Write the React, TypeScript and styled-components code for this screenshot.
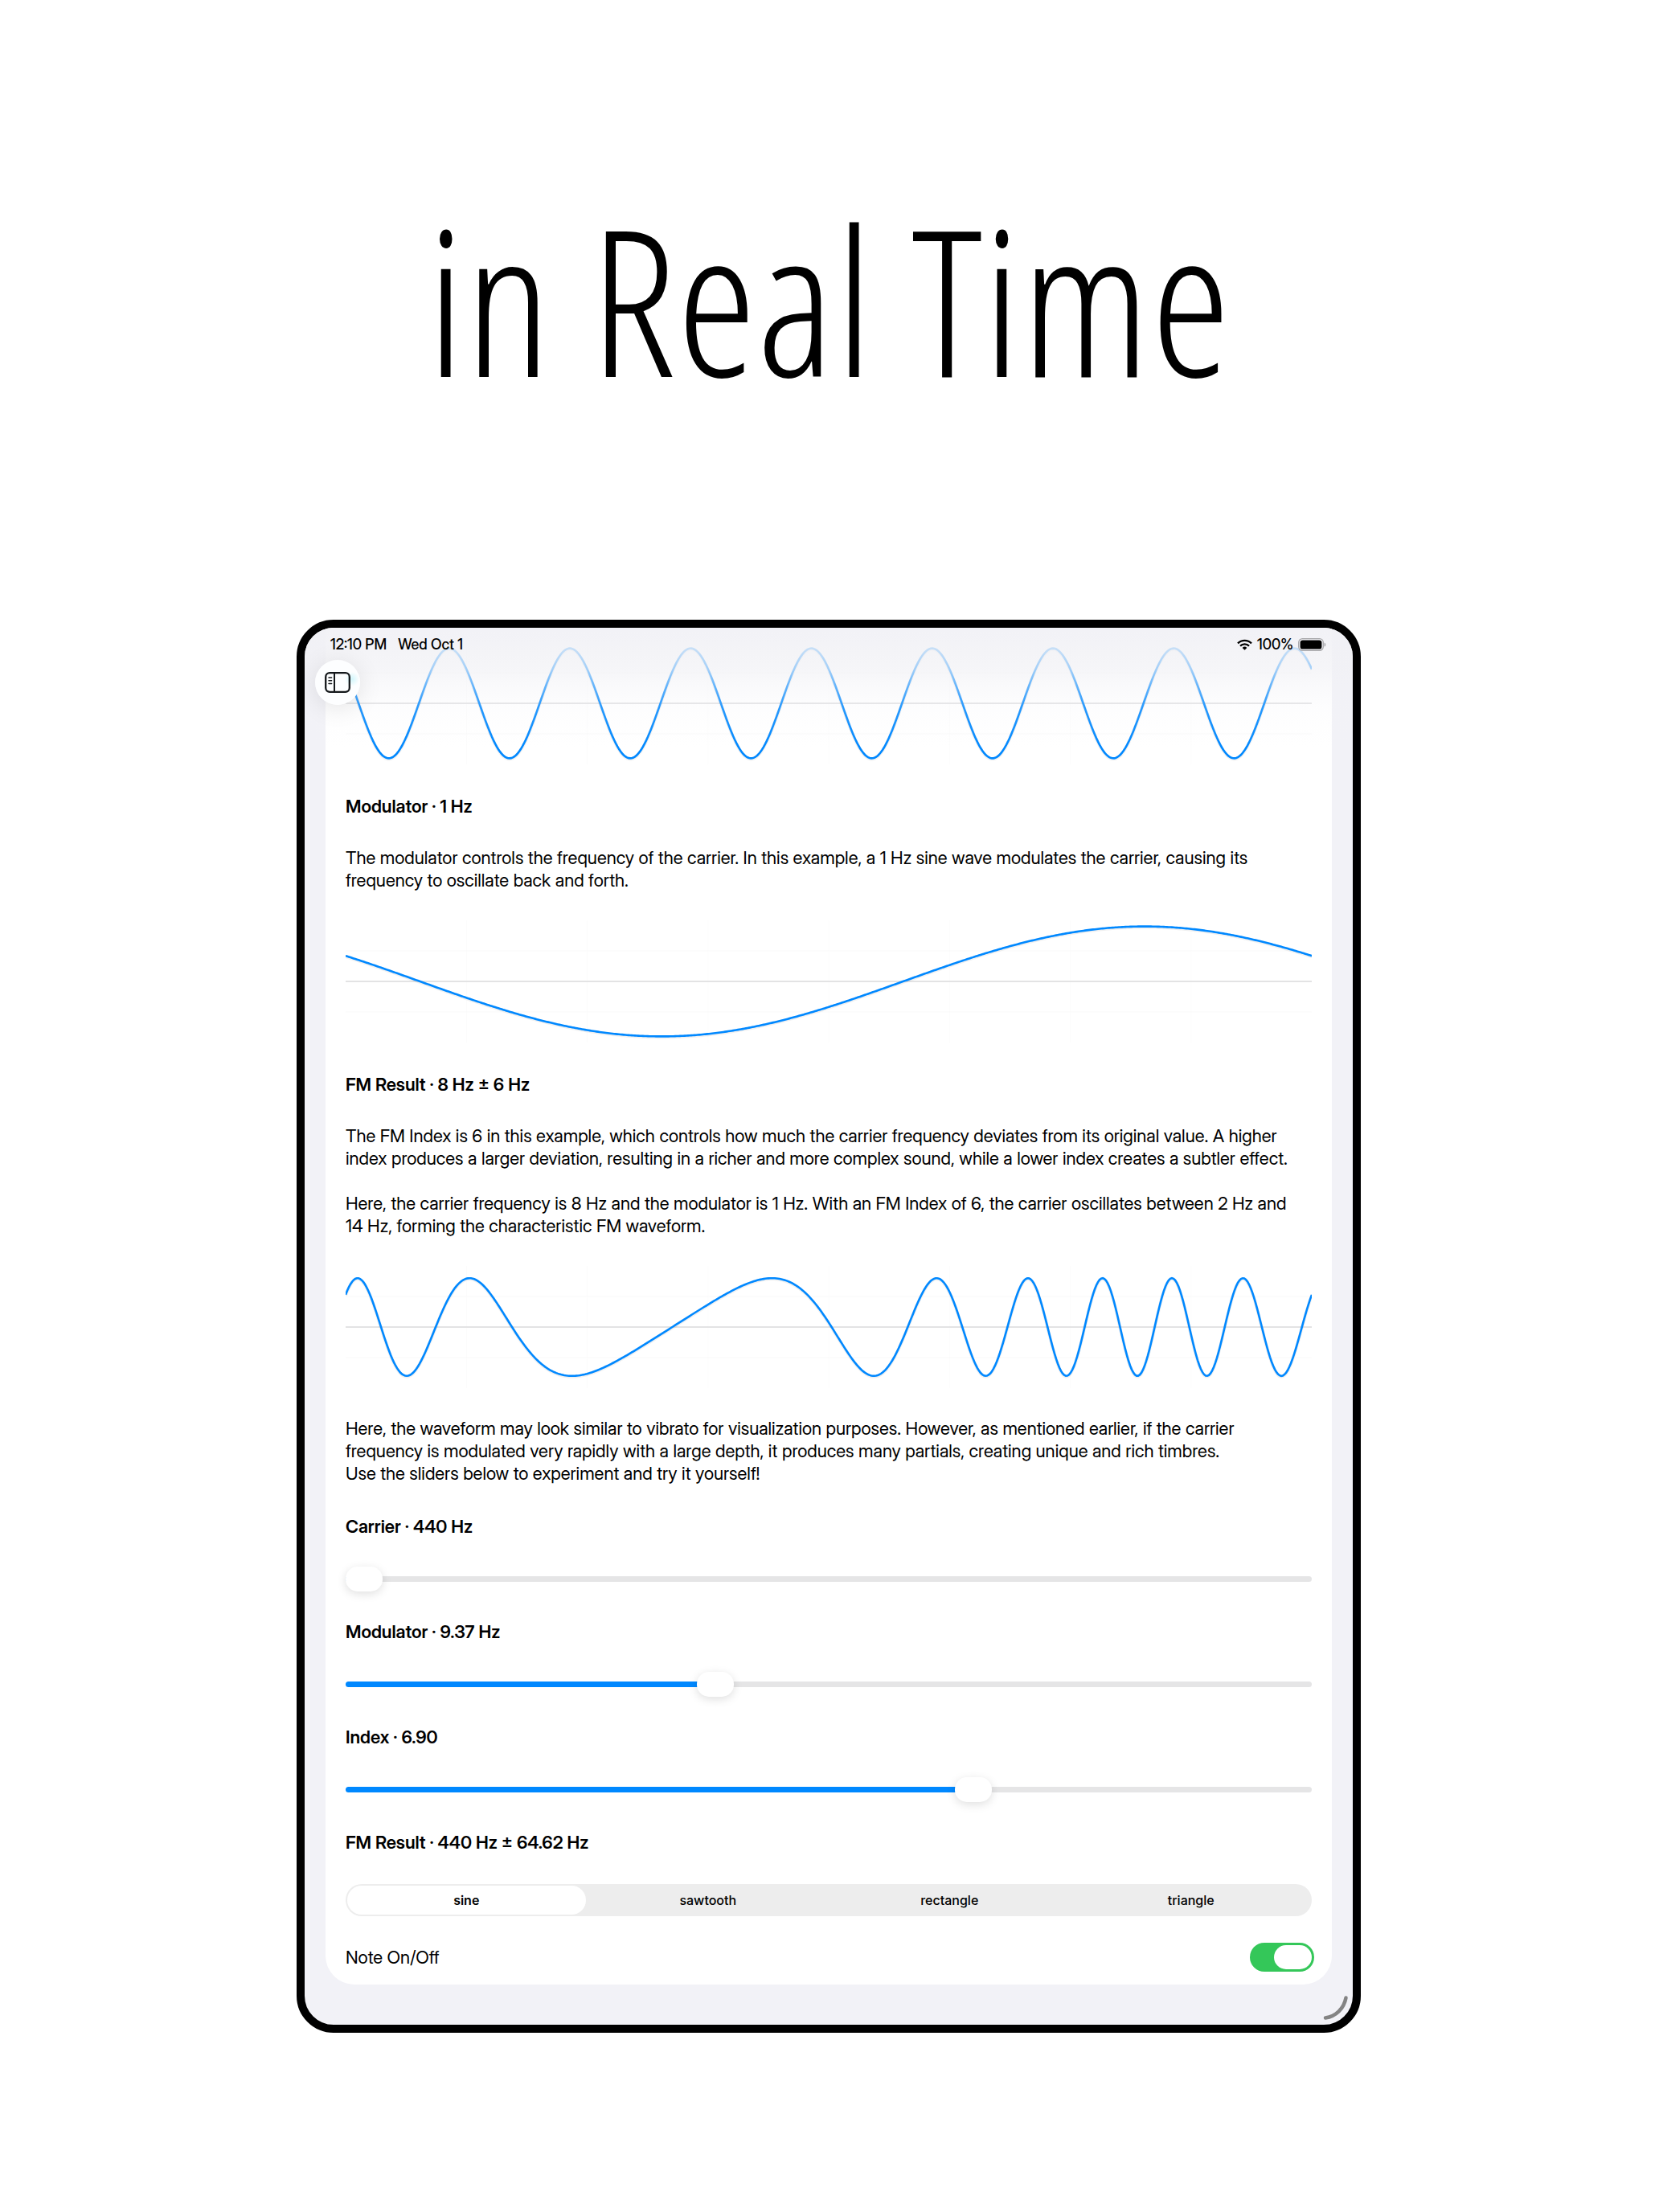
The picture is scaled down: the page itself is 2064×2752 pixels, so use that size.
import React, { useId, useState } from "react";
import styled, { createGlobalStyle } from "styled-components";

const GlobalStyle = createGlobalStyle`
  *, *::before, *::after { box-sizing: border-box; }
  body {
    margin: 0;
    background: #fff;
    color: #000;
    font-family: "Inter Display", Inter, "Liberation Sans", sans-serif;
  }
  h1, h2, p, fieldset { margin: 0; padding: 0; border: 0; }
`;

const Page = styled.main`
  display: flex;
  flex-direction: column;
  align-items: center;
  padding: 0 2px 223px 0;
`;

const Hero = styled.header`
  display: flex;
  width: 100%;
  height: 771px;
  justify-content: center;
  padding-top: 226px;
`;

const Headline = styled.h1`
  font-family: "Open Sans Condensed Light", "Open Sans Condensed", "Roboto Condensed", sans-serif;
  font-weight: 300;
  font-size: 254px;
  line-height: 290px;
  white-space: nowrap;
`;

const Device = styled.section`
  position: relative;
  width: 100%;
  max-width: 1324px;
  overflow: hidden;
  border: 10px solid #000;
  border-radius: 46px;
  background: #f2f2f7;
  padding: 0 26px 50px;
`;

const Card = styled.article`
  display: flex;
  flex-direction: column;
  gap: 38px;
  padding: 18px 25px 16px;
  border-radius: 0 0 36px 36px;
  background: #fff;
`;

const Group = styled.div`
  display: flex;
  flex-direction: column;
  gap: 36px;
`;

const Title = styled.h2`
  font-size: 22px;
  line-height: 28px;
  font-weight: 600;
`;

const Text = styled.p`
  font-size: 22px;
  line-height: 28px;

  & + & {
    margin-top: -8px;
  }
`;

const ChartSvg = styled.svg`
  display: block;
  width: 100%;
  height: 152px;
`;

const TopFade = styled.div`
  position: absolute;
  inset: 0 0 auto;
  height: 150px;
  background: linear-gradient(
    rgba(241, 241, 246, 0.95) 0%,
    rgba(241, 241, 245, 0.8) 20%,
    rgba(241, 241, 245, 0.68) 34%,
    rgba(242, 242, 246, 0.42) 48%,
    rgba(243, 243, 247, 0.16) 66%,
    rgba(245, 245, 248, 0) 100%
  );
  pointer-events: none;
`;

const StatusBar = styled.div`
  position: absolute;
  inset: 0 0 auto;
  display: flex;
  align-items: center;
  justify-content: space-between;
  height: 41px;
  padding: 0 33px 0 32px;
  font-size: 18px;
  line-height: 24px;
  font-weight: 500;
`;

const StatusSide = styled.div<{ $gap: number }>`
  display: flex;
  align-items: center;
  gap: ${(p) => p.$gap}px;
`;

const SidebarButton = styled.button`
  position: absolute;
  top: 40px;
  left: 13px;
  display: grid;
  place-items: center;
  width: 56px;
  height: 56px;
  padding: 0;
  border: 0;
  border-radius: 50%;
  background: radial-gradient(circle at 46px 24px, #d2f6fb 0, #fdfeff 9px);
  box-shadow: 0 4px 30px rgba(0, 0, 0, 0.1);
  color: #14181b;
`;

const Grip = styled.svg`
  position: absolute;
  right: 3px;
  bottom: 3px;
  width: 34px;
  height: 34px;
`;

const SliderBlock = styled.div`
  display: flex;
  flex-direction: column;
  gap: 36px;
`;

const SliderLabel = styled.label`
  font-size: 22px;
  line-height: 28px;
  font-weight: 600;
`;

const Range = styled.input`
  --fill: 0%;
  appearance: none;
  display: block;
  width: 100%;
  height: 31px;
  margin: 0;
  background: transparent;

  &::-webkit-slider-runnable-track {
    height: 7px;
    border-radius: 4px;
    background: linear-gradient(to right, #0088ff var(--fill), #e5e5e6 var(--fill));
  }
  &::-webkit-slider-thumb {
    appearance: none;
    width: 46px;
    height: 31px;
    margin-top: -12px;
    border-radius: 15px;
    background: #fff;
    box-shadow: 0 3px 12px rgba(0, 0, 0, 0.13);
  }
`;

const Segments = styled.fieldset`
  display: grid;
  grid-template-columns: repeat(4, minmax(0, 1fr));
  height: 40px;
  border-radius: 20px;
  background: #ededed;
`;

const Segment = styled.label`
  display: grid;
  place-items: center;
  height: 36px;
  margin: 2px;
  border-radius: 18px;
  font-family: Inter, "Liberation Sans", sans-serif;
  font-size: 16px;
  line-height: 20px;
  font-weight: 500;

  &:has(input:checked) {
    background: #fff;
    font-weight: 600;
  }
  input {
    position: absolute;
    opacity: 0;
    pointer-events: none;
  }
`;

const ToggleRow = styled.label`
  display: flex;
  align-items: center;
  justify-content: space-between;
  margin-right: -3px;
  font-size: 22px;
  line-height: 28px;
`;

const Switch = styled.input`
  appearance: none;
  width: 80px;
  height: 36px;
  margin: 0;
  padding: 3px;
  border-radius: 18px;
  background: #d9d9dc;

  &::before {
    content: "";
    display: block;
    width: 47px;
    height: 30px;
    border-radius: 15px;
    background: #fff;
  }
  &:checked { background: #34c759; }
  &:checked::before { margin-left: auto; }
`;

const ControlStack = styled.div`
  display: flex;
  flex-direction: column;
  gap: 33px;
`;

type Wave = (t: number) => number;
const TAU = Math.PI * 2;

const carrierWave: Wave = (t) => 0.9 * Math.sin(TAU * (8 * t + 0.393));
const modulatorWave: Wave = (t) => 0.9 * Math.sin(TAU * (t + 0.423));
const fmWave: Wave = (t) =>
  0.8 * Math.sin(TAU * (8 * t + 0.3) - 6 * Math.cos(TAU * (t + 0.4127)));

function Chart({ wave, label }: { wave: Wave; label: string }) {
  const w = 1202;
  const columns = 8;
  const points: string[] = [];
  for (let x = 0; x <= w; x += 2) {
    points.push(`${x},${(76 - 76 * wave(x / w)).toFixed(2)}`);
  }
  const verticals = Array.from({ length: columns - 1 }, (_, i) => ((i + 1) * w) / columns);
  return (
    <ChartSvg viewBox={`0 0 ${w} 152`} preserveAspectRatio="none" role="img" aria-label={label}>
      {verticals.map((x) => (
        <line key={x} x1={x} x2={x} y1={0} y2={152} stroke="#fcfcfc" strokeWidth={1} />
      ))}
      <line x1={0} x2={w} y1={38} y2={38} stroke="#f9f9f9" strokeWidth={1} />
      <line x1={0} x2={w} y1={114} y2={114} stroke="#f9f9f9" strokeWidth={1} />
      <line x1={0} x2={w} y1={76} y2={76} stroke="#e3e3e4" strokeWidth={2} />
      <polyline
        points={points.join(" ")}
        fill="none"
        stroke="#000"
        strokeOpacity={0.06}
        strokeWidth={4}
        transform="translate(0 1)"
      />
      <polyline points={points.join(" ")} fill="none" stroke="#0088ff" strokeWidth={2.6} />
    </ChartSvg>
  );
}

interface SliderProps {
  label: string;
  min: number;
  max: number;
  value: number;
  onChange: (value: number) => void;
}

function Slider({ label, min, max, value, onChange }: SliderProps) {
  const id = useId();
  const fill = ((value - min) / (max - min)) * 96 + 2;
  return (
    <SliderBlock>
      <SliderLabel htmlFor={id}>{label}</SliderLabel>
      <Range
        id={id}
        type="range"
        min={min}
        max={max}
        step={0.01}
        value={value}
        onChange={(e) => onChange(Number(e.target.value))}
        style={{ "--fill": `${fill}%` } as React.CSSProperties}
      />
    </SliderBlock>
  );
}

function SidebarIcon() {
  return (
    <svg width="32" height="26" viewBox="0 0 32 26" fill="none" stroke="currentColor" aria-hidden="true">
      <rect x="1.2" y="1.2" width="29.6" height="23.6" rx="5" strokeWidth="2.3" />
      <path d="M12 1v24" strokeWidth="2" />
      <path d="M5 7h3.6M5 10.7h3.6M5 14.4h3.6" strokeWidth="1.5" strokeLinecap="round" />
    </svg>
  );
}

function WifiIcon() {
  return (
    <svg width="19" height="14" viewBox="0 0 19 14" aria-hidden="true">
      <g fill="none" stroke="#000" strokeWidth="2.4">
        <path d="M1 5.4a12 12 0 0 1 17 0" />
        <path d="M4 8.6a7.8 7.8 0 0 1 11 0" />
      </g>
      <path d="M9.5 13.8 6.6 11a4.1 4.1 0 0 1 5.8 0z" />
    </svg>
  );
}

function BatteryIcon() {
  return (
    <svg width="35" height="16" viewBox="0 0 35 16" aria-hidden="true">
      <rect x="0.7" y="0.7" width="30.6" height="14.6" rx="4.6" fill="none" stroke="#a4a4a7" strokeWidth="1.2" />
      <rect x="2.6" y="2.4" width="26.8" height="11.2" rx="3.2" />
      <path d="M32.6 5.4c2.2.8 2.2 4.4 0 5.2z" fill="#a4a4a7" />
    </svg>
  );
}

const shapes = ["sine", "sawtooth", "rectangle", "triangle"];

export default function App() {
  const [carrier, setCarrier] = useState(440);
  const [modulator, setModulator] = useState(9.37);
  const [index, setIndex] = useState(6.9);
  const [shape, setShape] = useState("sine");
  const [noteOn, setNoteOn] = useState(true);
  const deviation = Math.floor(modulator * index * 100) / 100;
  const deviationText = modulator === 9.37 && index === 6.9 ? "64.62" : deviation.toFixed(2);

  return (
    <>
      <GlobalStyle />
      <Page>
        <Hero>
          <Headline>in Real Time</Headline>
        </Hero>
        <Device>
          <Card>
            <Chart wave={carrierWave} label="Carrier waveform" />
            <Group>
              <Title>Modulator · 1 Hz</Title>
              <Text>
                The modulator controls the frequency of the carrier. In this example, a 1 Hz sine wave modulates the
                carrier, causing its frequency to oscillate back and forth.
              </Text>
              <Chart wave={modulatorWave} label="Modulator waveform" />
            </Group>
            <Group>
              <Title>FM Result · 8 Hz ± 6 Hz</Title>
              <Text>
                The FM Index is 6 in this example, which controls how much the carrier frequency deviates from its
                original value. A higher index produces a larger deviation, resulting in a richer and more complex
                sound, while a lower index creates a subtler effect.
              </Text>
              <Text>
                Here, the carrier frequency is 8 Hz and the modulator is 1 Hz. With an FM Index of 6, the carrier
                oscillates between 2 Hz and 14{"\u00a0"}Hz, forming the characteristic FM waveform.
              </Text>
              <Chart wave={fmWave} label="FM result waveform" />
              <Text>
                Here, the waveform may look similar to vibrato for visualization purposes. However, as mentioned
                earlier, if the carrier frequency is modulated very rapidly with a large depth, it produces many
                partials, creating unique and rich timbres.
                <br />
                Use the sliders below to experiment and try it yourself!
              </Text>
            </Group>
            <Group>
              <Slider label={`Carrier · ${carrier} Hz`} min={440} max={880} value={carrier} onChange={setCarrier} />
              <Slider
                label={`Modulator · ${modulator.toFixed(2)} Hz`}
                min={0}
                max={24.8}
                value={modulator}
                onChange={setModulator}
              />
              <Slider label={`Index · ${index.toFixed(2)}`} min={1} max={10} value={index} onChange={setIndex} />
              <Title>
                FM Result · {carrier} Hz ± {deviationText} Hz
              </Title>
            </Group>
            <ControlStack>
              <Segments aria-label="Waveform shape">
                {shapes.map((name) => (
                  <Segment key={name}>
                    <input
                      type="radio"
                      name="shape"
                      value={name}
                      checked={shape === name}
                      onChange={() => setShape(name)}
                    />
                    {name}
                  </Segment>
                ))}
              </Segments>
              <ToggleRow>
                Note On/Off
                <Switch
                  type="checkbox"
                  role="switch"
                  checked={noteOn}
                  onChange={(e) => setNoteOn(e.target.checked)}
                />
              </ToggleRow>
            </ControlStack>
          </Card>
          <TopFade />
          <StatusBar>
            <StatusSide $gap={14}>
              <span>12:10 PM</span>
              <span>Wed Oct 1</span>
            </StatusSide>
            <StatusSide $gap={6}>
              <WifiIcon />
              <span>100%</span>
              <BatteryIcon />
            </StatusSide>
          </StatusBar>
          <SidebarButton type="button" aria-label="Toggle sidebar">
            <SidebarIcon />
          </SidebarButton>
          <Grip viewBox="0 0 34 34" aria-hidden="true">
            <path d="M3 28.5C16 26.5 26 17 28.5 3.5" fill="none" stroke="#848484" strokeWidth="4.5" strokeLinecap="round" />
          </Grip>
        </Device>
      </Page>
    </>
  );
}
